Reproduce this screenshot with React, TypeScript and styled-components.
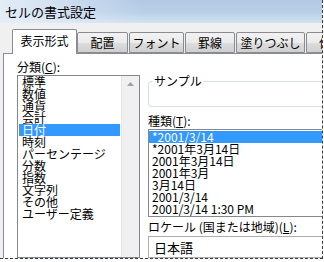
import React from 'react';
import styled, { createGlobalStyle } from 'styled-components';

const Global = createGlobalStyle`
  html, body {
    margin: 0;
    padding: 0;
    background: #ffffff;
  }
  body {
    font-family: "Noto Sans CJK JP", "Noto Sans", sans-serif;
    font-size: 12px;
    color: #000;
  }
`;

const Frame = styled.div`
  width: 322px;
  height: 258px;
  overflow: hidden;
  background: #f0f0f0;
  border-right: 1px dashed #3c3c3c;
  border-bottom: 1px dashed #3c3c3c;
  display: flex;
  flex-direction: column;
`;

const TitleBar = styled.div`
  height: 23px;
  flex: none;
  display: flex;
  align-items: center;
  padding-left: 5px;
  font-size: 13px;
  color: #000;
  background:
    linear-gradient(to right, rgba(232, 240, 249, 0.9) 0%, rgba(232, 240, 249, 0) 45%),
    linear-gradient(to bottom, #b2c9e4 0%, #b9cfe8 55%, #d3e2f2 100%);
`;

const Body = styled.div`
  flex: 1;
  padding: 6px 0 0 3px;
  display: flex;
  flex-direction: column;
  min-height: 0;
`;

const TabStrip = styled.div`
  display: flex;
  align-items: flex-end;
  padding-left: 9px;
  height: 24px;
  flex: none;
  position: relative;
  z-index: 1;
`;

const Tab = styled.div<{ $active?: boolean; $w: number }>`
  width: ${p => p.$w}px;
  flex: none;
  box-sizing: border-box;
  height: ${p => (p.$active ? 25 : 21)}px;
  margin-bottom: ${p => (p.$active ? -1 : 0)}px;
  margin-right: ${p => (p.$active ? 0 : 1)}px;
  border: 1px solid #898c95;
  border-bottom: ${p => (p.$active ? 'none' : '1px solid #898c95')};
  border-radius: 2px 2px 0 0;
  background: ${p =>
    p.$active ? '#ffffff' : 'linear-gradient(to bottom, #f2f2f2 0%, #ebebeb 50%, #dddddd 51%, #cfcfcf 100%)'};
  display: flex;
  align-items: center;
  justify-content: center;
  padding-bottom: ${p => (p.$active ? 3 : 0)}px;
  font-size: 12px;
  white-space: nowrap;
  overflow: hidden;
`;

const Panel = styled.div`
  flex: 1;
  background: #ffffff;
  border-left: 1px solid #898c95;
  border-top: 1px solid #898c95;
  display: flex;
  padding: 6px 0 0 13px;
  gap: 8px;
  min-height: 0;
`;

const Column = styled.div<{ $w?: number; $top?: number }>`
  display: flex;
  flex-direction: column;
  width: ${p => (p.$w ? `${p.$w}px` : 'auto')};
  flex: ${p => (p.$w ? 'none' : '1')};
  padding-top: ${p => p.$top || 0}px;
  min-width: 0;
`;

const Label = styled.div<{ $gap?: number }>`
  line-height: 13px;
  height: 13px;
  margin-top: ${p => p.$gap || 0}px;
  white-space: nowrap;
`;

const Key = styled.span`
  text-decoration: underline;
`;

const ListBox = styled.div`
  margin-top: 2px;
  border: 1px solid #828790;
  background: #ffffff;
  display: flex;
  flex: 1;
  min-height: 0;
`;

const Items = styled.div`
  flex: 1;
  display: flex;
  flex-direction: column;
  padding: 0 1px;
`;

const Item = styled.div<{ $selected?: boolean }>`
  height: 12px;
  line-height: 12px;
  padding-left: 3px;
  white-space: nowrap;
  background: ${p => (p.$selected ? '#3399ff' : 'transparent')};
  color: ${p => (p.$selected ? '#ffffff' : '#000000')};
`;

const ScrollBar = styled.div`
  width: 17px;
  flex: none;
  background: #f0f0f0;
  border-left: 1px solid #e6e6e6;
  display: flex;
  flex-direction: column;
  align-items: center;
  padding-top: 6px;
`;

const Group = styled.fieldset`
  margin: 0;
  padding: 0;
  box-sizing: border-box;
  height: 33px;
  border: 1px solid #d5dfe5;
  border-radius: 3px;
  width: 200px;
`;

const Legend = styled.legend`
  margin-left: 3px;
  padding: 0 2px;
  line-height: 12px;
  font-size: 12px;
`;

const TypeList = styled.div`
  margin-top: 2px;
  border: 1px solid #828790;
  width: 200px;
  padding: 1px 0;
  display: flex;
  flex-direction: column;
`;

const Combo = styled.div`
  margin-top: 3px;
  height: 20px;
  width: 200px;
  border: 1px solid #abadb3;
  display: flex;
  align-items: center;
  padding-left: 5px;
  font-size: 13px;
`;

const tabs = [
  { label: '表示形式', w: 65, active: true },
  { label: '配置', w: 51 },
  { label: 'フォント', w: 55 },
  { label: '罫線', w: 50 },
  { label: '塗りつぶし', w: 69 },
  { label: '保護', w: 50 },
];

const categories = ['標準', '数値', '通貨', '会計', '日付', '時刻', 'パーセンテージ', '分数', '指数', '文字列', 'その他', 'ユーザー定義'];

const types = ['*2001/3/14', '*2001年3月14日', '2001年3月14日', '2001年3月', '3月14日', '2001/3/14', '2001/3/14 1:30 PM'];

export default function App() {
  return (
    <>
      <Global />
      <Frame>
        <TitleBar>セルの書式設定</TitleBar>
        <Body>
          <TabStrip>
            {tabs.map(t => (
              <Tab key={t.label} $active={t.active} $w={t.w}>
                {t.label}
              </Tab>
            ))}
          </TabStrip>
          <Panel>
            <Column $w={123}>
              <Label>
                分類(<Key>C</Key>):
              </Label>
              <ListBox>
                <Items>
                  {categories.map(c => (
                    <Item key={c} $selected={c === '日付'}>
                      {c}
                    </Item>
                  ))}
                </Items>
                <ScrollBar>
                  <svg width="7" height="4" viewBox="0 0 7 4">
                    <path d="M0 4 L3.5 0 L7 4 Z" fill="#a0a0a0" />
                  </svg>
                </ScrollBar>
              </ListBox>
            </Column>
            <Column $top={15}>
              <Group>
                <Legend>サンプル</Legend>
              </Group>
              <Label $gap={7}>
                種類(<Key>T</Key>):
              </Label>
              <TypeList>
                {types.map((t, i) => (
                  <Item key={i} $selected={i === 0}>
                    {t}
                  </Item>
                ))}
              </TypeList>
              <Label $gap={3}>
                ロケール (国または地域)(<Key>L</Key>):
              </Label>
              <Combo>日本語</Combo>
            </Column>
          </Panel>
        </Body>
      </Frame>
    </>
  );
}
